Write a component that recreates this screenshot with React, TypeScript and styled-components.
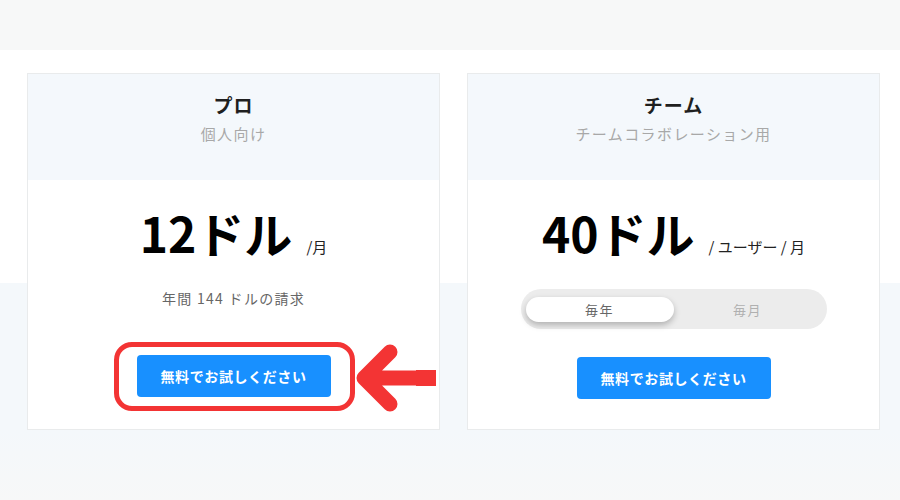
import React from "react";
import styled, { createGlobalStyle } from "styled-components";

const GlobalStyle = createGlobalStyle`
  body {
    margin: 0;
    font-family: "Noto Sans CJK JP", "Noto Sans", sans-serif;
    background: #f7f8f8;
  }
`;

interface Plan {
  name: string;
  target: string;
  price: string;
  unit: string;
  note?: string;
  toggle?: boolean;
  highlight?: boolean;
}

const plans: Plan[] = [
  { name: "プロ", target: "個人向け", price: "12ドル", unit: "/月", note: "年間 144 ドルの請求", highlight: true },
  { name: "チーム", target: "チームコラボレーション用", price: "40ドル", unit: "/ ユーザー / 月", toggle: true },
];

export default function App() {
  return (
    <StyledPage>
      <GlobalStyle />
      <StyledTopBand />
      <StyledSection>
        {plans.map((plan) => (
          <PlanCard key={plan.name} plan={plan} />
        ))}
      </StyledSection>
    </StyledPage>
  );
}

function PlanCard({ plan }: { plan: Plan }) {
  return (
    <StyledCard>
      <StyledCardHead>
        <StyledName>{plan.name}</StyledName>
        <StyledTarget>{plan.target}</StyledTarget>
      </StyledCardHead>
      <StyledCardBody>
        <StyledPriceRow>
          <StyledPrice>{plan.price}</StyledPrice>
          <StyledUnit>{plan.unit}</StyledUnit>
        </StyledPriceRow>
        {plan.note && <StyledNote>{plan.note}</StyledNote>}
        {plan.toggle && (
          <StyledToggle>
            <StyledToggleItem active>毎年</StyledToggleItem>
            <StyledToggleItem>毎月</StyledToggleItem>
          </StyledToggle>
        )}
        <StyledButtonWrap tight={!!plan.toggle}>
          <StyledButton>無料でお試しください</StyledButton>
          {plan.highlight && (
            <>
              <StyledRing />
              <StyledArrow width="80" height="72" viewBox="0 0 80 72">
                <path
                  d="M76 36 H12 M34 10 L8 36 L34 62"
                  fill="none"
                  stroke="#f33434"
                  strokeWidth="15"
                  strokeLinecap="round"
                  strokeLinejoin="round"
                />
                <rect x="60" y="28" width="20" height="16" fill="#f33434" />
              </StyledArrow>
            </>
          )}
        </StyledButtonWrap>
      </StyledCardBody>
    </StyledCard>
  );
}

const StyledPage = styled.div`
  width: 900px;
  height: 500px;
  overflow: hidden;
  background: #f7f8f8;
`;

const StyledTopBand = styled.div`
  height: 50px;
  background: #f7f8f8;
`;

const StyledSection = styled.section`
  display: flex;
  gap: 27px;
  padding: 23px 20px 70px 27px;
  background: linear-gradient(#ffffff 0, #ffffff 233px, #f4f8fb 233px, #f4f8fb 380px, #f7f8f8 450px);
`;

const StyledCard = styled.div`
  width: 413px;
  height: 357px;
  box-sizing: border-box;
  border: 1px solid #e9ebec;
  background: #ffffff;
  display: flex;
  flex-direction: column;
`;

const StyledCardHead = styled.div`
  height: 106px;
  background: #f4f8fc;
  display: flex;
  flex-direction: column;
  align-items: center;
  padding-top: 16px;
  box-sizing: border-box;
`;

const StyledName = styled.div`
  font-size: 19px;
  font-weight: 700;
  color: #1f1f1f;
  line-height: 30px;
  letter-spacing: 1px;
`;

const StyledTarget = styled.div`
  font-size: 15px;
  color: #a8a8a8;
  line-height: 22px;
  margin-top: 3px;
  letter-spacing: 1.4px;
`;

const StyledCardBody = styled.div`
  display: flex;
  flex-direction: column;
  align-items: center;
  padding-top: 22px;
`;

const StyledPriceRow = styled.div`
  display: flex;
  align-items: baseline;
  height: 60px;
  line-height: 60px;
`;

const StyledPrice = styled.span`
  font-size: 48px;
  font-weight: 700;
  color: #000000;
`;

const StyledUnit = styled.span`
  font-size: 15px;
  color: #222222;
  margin-left: 14px;
  white-space: pre;
`;

const StyledNote = styled.div`
  font-size: 14px;
  color: #666666;
  line-height: 20px;
  margin-top: 26px;
  letter-spacing: 1.3px;
`;

const StyledToggle = styled.div`
  margin-top: 27px;
  width: 306px;
  height: 40px;
  border-radius: 20px;
  background: #ececec;
  display: flex;
  align-items: center;
  padding: 0 5px;
  box-sizing: border-box;
`;

const StyledToggleItem = styled.div<{ active?: boolean }>`
  flex: 1;
  height: 25px;
  border-radius: 13px;
  display: flex;
  align-items: center;
  justify-content: center;
  font-size: 13px;
  letter-spacing: 1.5px;
  color: ${(p) => (p.active ? "#666666" : "#b0b0b0")};
  background: ${(p) => (p.active ? "#ffffff" : "transparent")};
  box-shadow: ${(p) => (p.active ? "0 3px 6px rgba(0, 0, 0, 0.25)" : "none")};
`;

const StyledButtonWrap = styled.div<{ tight: boolean }>`
  position: relative;
  margin-top: ${(p) => (p.tight ? "28px" : "47px")};
`;

const StyledButton = styled.button`
  width: 194px;
  height: 42px;
  border: none;
  border-radius: 4px;
  background: #1890ff;
  color: #ffffff;
  font-family: "Noto Sans CJK JP", sans-serif;
  font-size: 14px;
  font-weight: 700;
  letter-spacing: 0.6px;
  cursor: pointer;
`;

const StyledRing = styled.div`
  position: absolute;
  left: -23px;
  top: -13px;
  width: 241px;
  height: 69px;
  box-sizing: border-box;
  border: 5px solid #f33434;
  border-radius: 18px;
`;

const StyledArrow = styled.svg`
  position: absolute;
  left: 219px;
  top: -13px;
`;
